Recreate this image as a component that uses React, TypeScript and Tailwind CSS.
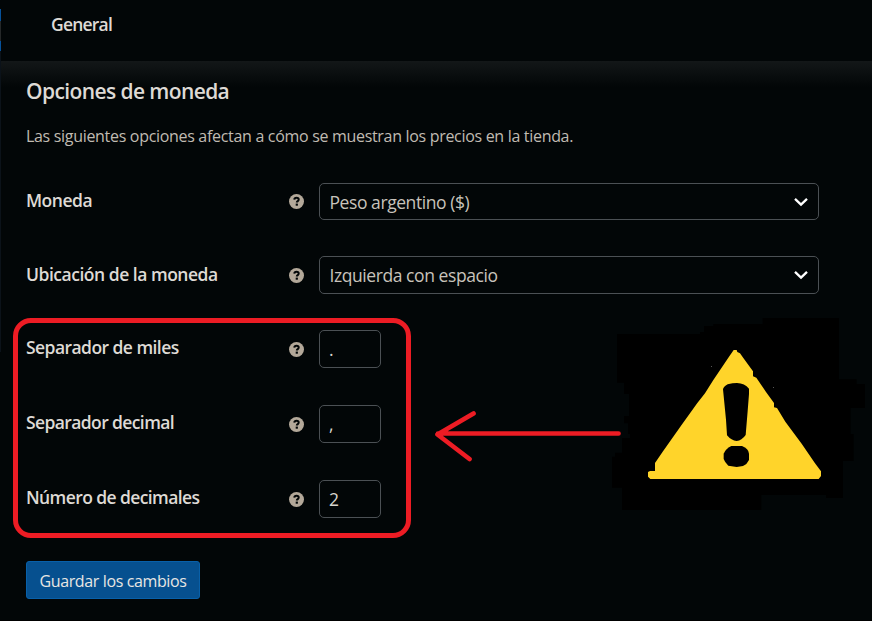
import React from "react";

function Help() {
  return (
    <svg viewBox="0 0 15 15" className="h-[15px] w-[15px] shrink-0" aria-label="Ayuda">
      <circle cx="7.5" cy="7.5" r="7.5" fill="#b3a899" />
      <path
        d="M5.300 5.600C5.400 4.100 6.300 3.700 7.500 3.700c1.400 0 2.200.7 2.200 1.800 0 1.600-1.900 1.600-1.900 3.100"
        fill="none"
        stroke="#020607"
        strokeWidth="2"
      />
      <rect x="6.700" y="9.600" width="2.200" height="2.100" fill="#020607" />
    </svg>
  );
}

function Row({ label, tracking, className, children }: { label: string; tracking: string; className: string; children: React.ReactNode }) {
  return (
    <div className={`flex items-center ${className}`}>
      <label className={`w-[263px] whitespace-nowrap text-[17.500px] font-semibold text-[#dedad5] ${tracking}`}>{label}</label>
      <Help />
      <div className="ml-[15px] h-full">{children}</div>
    </div>
  );
}

function SelectBox({ value, tracking }: { value: string; tracking: string }) {
  return (
    <div className="flex h-full w-[500px] items-center justify-between rounded-[5px] border border-[#4b5054] pr-[10px] pl-[9.500px] text-[17.500px] text-[#c8c3bb]">
      <span className={`pt-px whitespace-nowrap ${tracking}`}>{value}</span>
      <svg viewBox="0 0 14 10" className="h-[10px] w-[14px]" fill="none" stroke="#fff" strokeWidth="2.300">
        <path d="M1 1.800 7 7.600 13 1.800" />
      </svg>
    </div>
  );
}

function TextBox({ value }: { value: string }) {
  return (
    <div className="flex h-full w-[62px] items-center rounded-[5px] border border-[#4b5054] pt-px pl-[9px] text-[17.500px] text-[#d8d4cd]">
      {value}
    </div>
  );
}

function Annotations() {
  return (
    <>
      <div className="absolute top-[318px] left-[13px] h-[220px] w-[398px] rounded-[18px] border-[5px] border-[#ed1c24]" />
      <svg viewBox="0 0 816 630" className="absolute top-[310px] left-[600px] h-[210px] w-[272px]">
        <path
          fill="#000"
          d="M51 72H300V66H312V48H340V42H488V24H717V208H770V222H795V294H752V372H761V453H729V564H678V555H484V600H66V533H36V440H45V428H66V384H90V372H84V340H72V318H87V252H72V218H51Z"
        />
        <path
          fill="#ffd42a"
          d="M401 120H410L412 126 420 130 430 144 459 184V199L469 203 498 246 522 279V292L531 294 556 335 605 401 645 460 663 484V498L656 507H151L144 500V486L150 483H165V459L187 427 242 349 292 279 315 250 340 210 385 143Z"
        />
        <path
          fill="#000"
          d="M369 238Q370 230 383 223Q398 219 411 219Q434 220 447 236V252L443 303 437 375Q425 392 410 393Q394 392 381 376L378 329Z"
        />
        <path fill="#000" d="M394 408H426Q446 416 447 431V450Q442 462 429 468L410 471 385 467Q374 456 371 447V431Q376 417 394 408Z" />
        <path fill="#555" d="M333 168h3v3h-3zM519 231h3v3h-3z" />
      </svg>
      <svg viewBox="420 400 220 70" className="absolute top-[400px] left-[420px] h-[70px] w-[220px]" fill="none" stroke="#ed1c24" strokeWidth="4.700" strokeLinecap="round" strokeLinejoin="round">
        <path d="M618.500 433.500H438M473.500 413.500 437.500 434.500 469.500 459" />
      </svg>
    </>
  );
}

export default function App() {
  return (
    <div className="relative flex h-[621px] w-[872px] overflow-hidden border-b border-black bg-[#020607] font-['Open_Sans',sans-serif]">
      <div className="flex w-px shrink-0 flex-col pt-[9px]">
        <div className="h-3 bg-[#06519a]" />
        <div className="h-5 bg-[#252829]" />
        <div className="h-[10px] bg-[#06519a]" />
        <div className="h-[301px] bg-[#0b1219]" />
      </div>
      <div className="flex grow flex-col">
        <header className="flex h-[61px] items-start pt-[11px] pl-[50px]">
          <span className="text-[17.500px] leading-[26px] font-semibold tracking-[-0.8px] text-[#dedad5]">General</span>
        </header>
        <main className="flex h-[558px] flex-col bg-[linear-gradient(to_bottom,#131718_0px,#0b0f10_12px,#020607_26px)] pl-[25px]">
          <h2 className="mt-[15px] text-[21px] leading-[30px] font-semibold tracking-[-0.600px] text-[#dedad5]">Opciones de moneda</h2>
          <p className="mt-[18px] text-[16px] leading-[24px] tracking-[-0.310px] text-[#c0bbb2]">
            Las siguientes opciones afectan a cómo se muestran los precios en la tienda.
          </p>
          <Row label="Moneda" tracking="pb-[2px] tracking-[-0.500px]" className="mt-[35px] h-[37px]">
            <SelectBox value="Peso argentino ($)" tracking="tracking-[-0.430px]" />
          </Row>
          <Row label="Ubicación de la moneda" tracking="pb-[2px] tracking-[-0.480px]" className="mt-[36px] h-[38px]">
            <SelectBox value="Izquierda con espacio" tracking="tracking-[-0.430px]" />
          </Row>
          <Row label="Separador de miles" tracking="pb-[4px] tracking-[-0.560px]" className="mt-[36px] h-[38px]">
            <TextBox value="." />
          </Row>
          <Row label="Separador decimal" tracking="pb-[4px] tracking-[-0.610px]" className="mt-[37px] h-[38px]">
            <TextBox value="," />
          </Row>
          <Row label="Número de decimales" tracking="pb-[4px] tracking-[-0.600px]" className="mt-[37px] h-[38px]">
            <TextBox value="2" />
          </Row>
          <button className="mt-[43px] h-[38px] w-[174px] rounded-[3px] border border-[#0860a9] bg-[#06508f] pt-px text-[16px] tracking-[-0.370px] whitespace-nowrap text-[#e8e6e3]">
            Guardar los cambios
          </button>
        </main>
      </div>
      <Annotations />
    </div>
  );
}
